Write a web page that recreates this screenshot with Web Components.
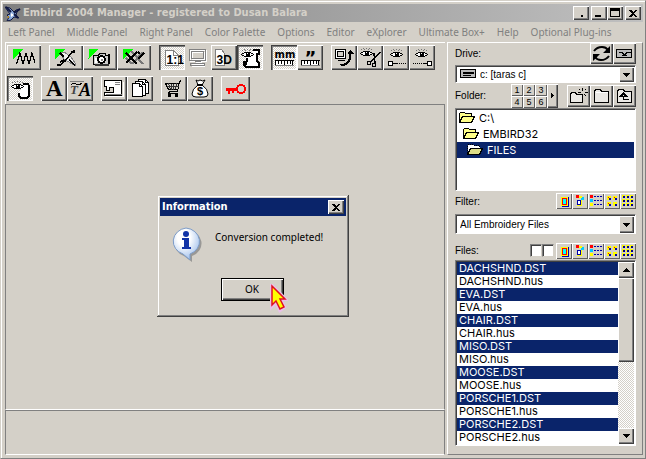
<!DOCTYPE html>
<html lang="en">
<head>
<meta charset="utf-8">
<title>Embird 2004 Manager</title>
<style>
html,body{margin:0;height:100%;background:#d4d0c8}
body{font:10px/13px "Noto Sans","Open Sans",sans-serif;color:#000;
 --navy:#0a246a;--label:"Liberation Sans",Arial,sans-serif;--list:Inter,Roboto,sans-serif}
</style>
</head>
<body>
<emb-app></emb-app>
<script>
const define=(name,html,setup)=>{
  const t=document.createElement('template');
  t.innerHTML='<style>*{box-sizing:border-box}:host{box-sizing:border-box}</style>'+html;
  customElements.define(name,class extends HTMLElement{
    connectedCallback(){
      if(this.shadowRoot)return;
      const r=this.attachShadow({mode:'open'});
      r.append(t.content.cloneNode(true));
      if(setup)setup(this,r);
    }
  });
};

/* ---------- icons ---------- */
const corner='<path fill="#0f0" d="M6 4h11l-11 10z"/>';
const eye=(x,y)=>`<g transform="translate(${x} ${y})"><path d="M3 0h1v1H3zM6 0h1v1H6zM9 0h1v1H9zM1 1h1v1H1zM4 1h1v1H4zM8 1h1v1H8zM11 1h1v1h-1z" fill="#777"/><path d="M2 4h9v3H2z" fill="#fff"/><path d="M3 3h7v1H3zM1 4h2v1H1zM10 4h2v1h-2zM0 5h1v1H0zM12 5h1v1h-1zM1 6h2v1H1zM10 6h2v1h-2zM3 7h7v1H3zM5 4h4v3H5z" fill="#000"/><path d="M6 4h1v1H6z" fill="#fff"/></g>`;
const page='<path d="M7 6h8l5 5v10H7z" fill="#fff" stroke="#808080"/><path d="M15 6v5h5" fill="none" stroke="#808080"/>';
const ruler='<path fill="#fff" d="M4 15h18v6H4z"/><path d="M4 21h19" stroke="#808080"/><path d="M4 16h19" stroke="#000"/><path d="M5 16v4M8 16v3M11 16v3M14 16v4M17 16v3M20 16v3M22 16v4" stroke="#000"/>';
const ICON={
wave:[34,25,corner+'<path d="M9 18h1l3-10 3 11 3-11 3 11 3-11 3 10" fill="none" stroke="#000" stroke-width="1.200"/>'],
needle:[34,25,corner+'<path d="M11 8l4-1 7 5 4 6v2l-3-1-8-5z" fill="#eee" stroke="#808080"/><path d="M11 8l4 4M20 15l6 5M8 20h3l5-4 7-9h2v-2M11 17l4-2" stroke="#000" stroke-width="1.500" fill="none"/>'],
camera:[34,25,corner+'<path d="M11 11h5l1-2h6v2h3v9H11z" fill="#ccc" stroke="#000"/><path d="M25 9h2v10h-2z" fill="#000"/><path d="M12 19h14v2H12z" fill="#333"/><circle cx="19" cy="15" r="3.500" fill="#fff" stroke="#000" stroke-width="2"/><path d="M18 14h2v2h-2z" fill="#888"/><path d="M12 13h2v5h-2z" fill="#fff"/>'],
hash:[34,25,corner+'<g fill="none" stroke-width="2"><path d="M14 6l12 13M26 7L15 19M9 13l6 6" stroke="#777"/><path d="M9 8l11 11M20 7L9 18M21 7l2 2M24 11l3-3M21 14l6-6" stroke="#000"/></g>'],
one:[26,25,page+'<text x="8" y="19" font-family="Liberation Sans" font-weight="bold" font-size="12">1:1</text>'],
screen:[26,25,'<path d="M5 5h16v11H5zM7 7h12v7H7zM10 17h6M7 19h12v2H7z" fill="none" stroke="#fff" transform="translate(1 1)"/><path d="M5 5h16v11H5zM7 7h12v7H7zM10 17h6M6 19h14v2H6z" fill="none" stroke="#808080"/>'],
three:[26,25,'<path d="M5 5h6l3 4v12H5z" fill="#fff" stroke="#808080"/><text x="6" y="19" font-family="Liberation Sans" font-weight="bold" font-size="12">3D</text>'],
scroll:[26,25,'<path d="M13 8l5-3h4v4h-2v7l2 3v3H9l-2-2v-3h3V8z" fill="#fff"/><path d="M16 5h6v4h-3M20 9v7l2 2v4H9l-2-2v-3h2v3M10 13v4" fill="none" stroke="#000" stroke-width="1.500"/>'+eye(4,4)],
mm:[26,25,'<text x="4" y="13" font-family="DejaVu Sans" font-weight="bold" font-size="10">mm</text>'+ruler],
inch:[26,25,'<text x="8" y="19" font-family="DejaVu Sans" font-weight="bold" font-size="18">”</text>'+ruler],
send:[26,25,'<path d="M5 5h10v9H5z" fill="#fff" stroke="#000" stroke-width="1.500"/><path d="M7 7h6v5H7z" fill="#d4d0c8" stroke="#000"/><path d="M7 16h7" stroke="#000"/><path d="M10 22v-2q9-1 9-11h-2l3-4 3 4h-2q0 12-11 13z" fill="#000"/>'],
cut:[26,25,eye(3,3)+'<path d="M23 7l-9 10M17 8l1 11" stroke="#000" stroke-width="1.500"/><circle cx="12" cy="18" r="2" fill="none" stroke="#000"/><circle cx="17" cy="20" r="2" fill="none" stroke="#000"/>'],
first:[26,25,eye(7,4)+'<path d="M5 16h4v4H5z" fill="#fff" stroke="#000"/><path d="M10 18h4" stroke="#000"/><path d="M14 18h10" stroke="#000" stroke-dasharray="1 1"/>'],
last:[26,25,eye(6,4)+'<path d="M18 16h4v4h-4z" fill="#fff" stroke="#000"/><path d="M14 18h4" stroke="#000"/><path d="M4 18h10" stroke="#000" stroke-dasharray="1 1"/>'],
eyehoop:[26,25,'<path d="M16 8h4q2 0 2 3v7q0 4-4 4h-4q-2-1-2-3v-2" fill="#fff" stroke="#000" stroke-width="2"/>'+eye(4,5)],
letter:[26,25,'<text x="5" y="20" font-family="Liberation Serif" font-weight="bold" font-size="23">A</text>'],
script:[26,25,'<path d="M3 5h14" stroke="#808080"/><path d="M4 9q2-3 5-1t6-1" stroke="#000" fill="none"/><text x="3" y="18" font-family="Liberation Serif" font-weight="bold" font-style="italic" font-size="13" fill="#444">T</text><text x="12" y="20" font-family="Liberation Serif" font-weight="bold" font-style="italic" font-size="18">A</text>'],
sewing:[26,25,'<path d="M4 5h17v15H4v-3h9V12H9v3H6v-4H4z" fill="#fff" stroke="#000"/><path d="M5 19h16M14 7h5M14 9h5" stroke="#808080"/><path d="M4 21h19V6" fill="none" stroke="#fff"/>'],
pages:[26,25,'<path d="M12 4h7l3 3v11H12z" fill="#fff" stroke="#000"/><path d="M9 6h7l3 3v11H9z" fill="#fff" stroke="#000"/><path d="M6 8h7l3 3v10H6z" fill="#fff" stroke="#000"/><path d="M13 8v3h3M16 6v3h3M19 4v3h3" fill="none" stroke="#000"/>'],
cart:[26,25,'<path d="M21 5l-2 1-2 10H9M5 8h13M5 8l3 6h9M9 16l-1 2h9" fill="none" stroke="#000"/><path d="M8 8l2 6M11 8v6M13 8v6M16 8l-1 6M6 11h12" stroke="#333"/><circle cx="9" cy="20" r="1.500"/><circle cx="16" cy="20" r="1.500"/>'],
money:[26,25,'<path d="M9 4q2 2 4 0 3 2 5 0l-3 5q6 4 6 9 0 3-4 3H9q-4 0-4-3 0-5 6-9z" fill="#fff" stroke="#000"/><path d="M10 9h6" stroke="#000" stroke-width="2"/><text x="10" y="19" font-family="Liberation Sans" font-weight="bold" font-size="11">$</text>'],
key:[29,25,'<path d="M5 12h12v3H9v3H7v-3H5z" fill="#f00"/><path d="M11 14h2v3h-2z" fill="#f00"/><circle cx="20" cy="13" r="4" fill="none" stroke="#f00" stroke-width="2"/>'],
refresh:[23,21,'<g fill="none" stroke="#000" stroke-width="2"><path d="M4 8q3-4 8-4 4 0 6 3"/><path d="M19 13q-3 4-8 4-4 0-6-3"/></g><path d="M20 3v7h-7zM3 18v-7h7z"/>'],
drive:[17,10,'<path d="M1 1h15v8H1z" fill="#bbb" stroke="#000"/><path d="M3 4h11" stroke="#000" stroke-width="2"/><path d="M3 7h8" stroke="#000"/>'],
disk:[17,10,'<path d="M1 1h15v8H1z" fill="#bbb" stroke="#000"/><path d="M3 4h4l1 2h2l1-2h4M6 7h5" fill="none" stroke="#000"/>'],
folder:[16,16,'<path d="M1 4l1-2h5l1 2h7v11H1z" fill="url(#d)" stroke="#000"/><path d="M2 5h12" stroke="#fff"/>'],
newf:[18,16,'<path d="M1 7l1-2h4l1 2h6v8H1z" fill="url(#d)" stroke="#000"/><path d="M13 0v3M13 7v3M8 5h3M15 5h3M10 2l1 1M16 2l-1 1M15 7l2 2" stroke="#000"/>'],
upf:[16,16,'<path d="M1 4l1-2h5l1 2h7v11H1z" fill="url(#d)" stroke="#000"/><path d="M4 9l3-3 3 3zM7 8v4h5" fill="none" stroke="#000" stroke-width="1.500"/>'],
open:[16,12,'<path d="M1 11V2l1-1h4l1 1h6v3M1 11L4 5h12l-3 6z" fill="#ff8" stroke="#000"/>'],
openx:[16,12,'<path d="M1 11V2l1-1h4l1 1h6v3z" fill="#fff" stroke="#000" stroke-dasharray="1 1"/><path d="M1 11L4 5h12l-3 6z" fill="#dd8" stroke="#000"/>'],
v1:[14,14,'<path d="M4 3h7v9H4z" fill="#ff0"/><path d="M5 4h5v7H5z" fill="#f00"/><path d="M6 5h3v5H6z" fill="#0ff"/><path d="M11 3h1v10H5v-1h6z" fill="#00a"/>'],
v2:[14,14,'<path d="M3 1h3v3H3z" fill="#f00"/><path d="M4 6h5v6H4z" fill="#ff0"/><path d="M5 7h3v4H5z" fill="#fff" stroke="#00a"/><path d="M8 3h3v3H8z" fill="#0cf"/><path d="M6 2h3v2H6z" fill="#ff0"/>'],
v3:[14,14,'<path d="M1 1h3v3H1z" fill="#f00"/><path d="M1 5h3v3H1z" fill="#0cf"/><path d="M1 9h3v3H1z" fill="#ff0"/><path d="M5 3h9M5 7h9M5 11h9" stroke="#00a" stroke-dasharray="2 1"/>'],
v4:[14,14,'<path d="M2 2h4v4H2zM8 2h4v4H8zM2 8h4v4H2zM8 8h4v4H8z" fill="#ff0"/><path d="M4 4h2v2H4zM10 4h2v2h-2zM4 10h2v2H4zM10 10h2v2h-2z" fill="#00a"/><path d="M3 3h1v1H3zM9 3h1v1H9zM3 9h1v1H3z" fill="#f00"/>'],
v5:[14,14,'<path d="M1 1h3v3H1zM5 1h3v3H5zM9 1h3v3H9zM1 5h3v3H1zM5 5h3v3H5zM9 5h3v3H9zM1 9h3v3H1zM5 9h3v3H5zM9 9h3v3H9z" fill="#ff0"/><path d="M2 2h2v2H2zM6 2h2v2H6zM10 2h2v2h-2zM2 6h2v2H2zM6 6h2v2H6zM10 6h2v2h-2zM2 10h2v2H2zM6 10h2v2H6zM10 10h2v2h-2z" fill="#008"/>'],
bird:[16,16,'<path d="M0 2l5 1 4 4 2-2 4-1-3 3-1 3 3 3-5-1-3 3-4 1 2-4-2-2 3-1z" fill="#8aa8d8" stroke="#101840"/><path d="M1 2l5 5M9 8l6-4M9 9l4 4" stroke="#101840" stroke-width="2"/><path d="M6 8l3 2-3 2z" fill="#fff"/><path d="M2 12l2-1v2z" fill="#d90"/>'],
close:[10,9,'<path d="M1 1h2l2 2 2-2h2L6 4.500 9 8H7L5 6 3 8H1l3-3.500z" fill="#000"/>'],
max:[11,10,'<path d="M1 1h9v8H1z" fill="none" stroke="#000"/><path d="M1 1h9v2H1z" fill="#000"/>'],
min:[10,10,'<path d="M1 7h6v2H1z" fill="#000"/>'],
dot:[10,10,'<path d="M5 7h2v2H5z" fill="#000"/>'],
down:[7,4,'<path d="M0 0h7L3.500 4z" fill="#000"/>'],
up:[7,4,'<path d="M0 4h7L3.500 0z" fill="#000"/>'],
right:[3,5,'<path d="M0 0l3 2.500-3 2.500z" fill="#000"/>'],
info:[34,36,'<defs><radialGradient id="g" cx=".4" cy=".3" r=".8"><stop offset=".3" stop-color="#fff"/><stop offset="1" stop-color="#8fb4e8"/></radialGradient></defs><path d="M18 3a15 13.500 0 0 1 4 26v6l-8-6A15 13.500 0 0 1 18 3z" fill="#8a8a8a" opacity=".8"/><path d="M16 1a15 13.500 0 0 1 4 26v6l-7-6A15 13.500 0 0 1 16 1z" fill="url(#g)" stroke="#7d9cc8"/><circle cx="16" cy="7" r="3" fill="#1234a8"/><path d="M12 11h7v9h2v2H12v-2h2v-7h-2z" fill="#1234a8"/>'],
cursor:[18,29,'<path d="M2 2l13 13h-5l4 8-4 3-4-8-4 4z" fill="#ff0" stroke="#e8c0e8" stroke-width="4"/><path d="M2 2l13 13h-5l4 8-4 2-4-8-4 4z" fill="#ff0" stroke="#e01020" stroke-width="1.500"/>']
};
const SOFT=/^(info|cursor|bird|refresh|money)$/;
const HALF=/^(open|openx|page|one|screen|three|sewing|pages|folder|newf|upf|camera|cart|drive|disk|max|mm|inch|send|v2|v3)$/;
define('emb-icon','<style>:host{display:block;flex:none}svg{display:block}</style><div></div>',(h,r)=>{
  const n=h.getAttribute('name'),[w,H,s]=ICON[n];
  r.querySelector('div').innerHTML=`<svg width="${w}" height="${H}" viewBox="0 0 ${w} ${H}" aria-hidden="true" ${SOFT.test(n)?'':'shape-rendering="crispEdges"'}><defs><pattern id="d" width="2" height="2" patternUnits="userSpaceOnUse"><rect width="2" height="2" fill="#d4d0c8"/><path d="M0 0h1v1H0zM1 1h1v1H1z" fill="#fff"/></pattern></defs>${HALF.test(n)?`<g transform="translate(-.5 -.5)">${s}</g>`:s}</svg>`;
});

/* ---------- push button ---------- */
define('emb-button',`<style>
:host{display:block;flex:none;width:26px;height:25px}
:host([wide]){width:34px}
button{width:100%;height:100%;padding:0;border:0;font:inherit;color:#000;background:#d4d0c8;display:flex;align-items:center;justify-content:center;overflow:hidden;
 box-shadow:inset 1px 1px #fff,inset -1px -1px #404040,inset -2px -2px #808080}
:host([pressed]) button{background:conic-gradient(#fff 25%,#d4d0c8 0 50%,#fff 0 75%,#d4d0c8 0) 0 0/2px 2px;box-shadow:inset 1px 1px #404040,inset 2px 2px #808080,inset -1px -1px #fff}
:host([flat]) button{box-shadow:none}
:host([thin]) button{box-shadow:inset 1px 1px #fff,inset -1px -1px #606060}
:host([default]) button{border:1px solid #000}
</style><button type="button"><slot></slot></button>`,(h,r)=>{
  const b=r.querySelector('button');
  if(h.hasAttribute('label'))b.setAttribute('aria-label',h.getAttribute('label'));
  if(h.hasAttribute('pressed'))b.setAttribute('aria-pressed','true');
});

/* ---------- title bar and menu ---------- */
define('emb-titlebar',`<style>
:host{display:flex;align-items:center;height:18px;padding:0 2px;gap:2px;background:linear-gradient(90deg,#808080,#c0c0c0);color:#d4d0c8}
h1{flex:1;margin:0;white-space:nowrap;font:bold 11px/18px "DejaVu Sans Condensed","DejaVu Sans",sans-serif}
.w{display:flex;gap:2px}.p{display:flex}
emb-button{width:16px;height:14px}
</style><emb-icon name="bird"></emb-icon><h1><slot></slot></h1>
<div class="w"><emb-button label="Tray"><emb-icon name="dot"></emb-icon></emb-button><div class="p"><emb-button label="Minimize"><emb-icon name="min"></emb-icon></emb-button><emb-button label="Maximize"><emb-icon name="max"></emb-icon></emb-button></div><emb-button label="Close"><emb-icon name="close"></emb-icon></emb-button></div>`);

define('emb-menu',`<style>
:host{display:block;height:20px}
nav{display:flex;gap:12px;padding:3px 5px}
a{color:#808080;text-decoration:none;white-space:nowrap;line-height:14px}
</style><nav></nav>`,(h,r)=>{
  r.querySelector('nav').innerHTML=h.getAttribute('items').split('|').map(t=>`<a href="#">${t}</a>`).join('');
});

/* ---------- toolbar ---------- */
define('emb-toolbar',`<style>
:host{display:flex;flex-direction:column;gap:6px;height:62px;padding:2px 0 2px 1px;border:solid #fff;border-width:1px 0 0 1px}
.row{display:flex;gap:8px}.g{display:flex}.k{width:29px}
</style><div id="a" class="row"></div><div id="b" class="row"></div>`,(h,r)=>{
  const draw=(id,groups)=>r.getElementById(id).innerHTML=groups.map(g=>'<div class="g">'+g.split(' ').map(x=>{
    const n=x.replace(/[*~+]/g,'');
    return `<emb-button label="${n}"${x.includes('*')?' pressed':''}${x.includes('~')?' flat':''}${x.includes('+')?' wide':''}${n=='key'?' class="k"':''}><emb-icon name="${n}"></emb-icon></emb-button>`}).join('')+'</div>').join('');
  draw('a',['wave+','needle+ camera+ hash+','one* screen~ three scroll*','mm* inch','send cut first last']);
  draw('b',['eyehoop*','letter script','sewing pages','cart money','key']);
});

/* ---------- combo box ---------- */
define('emb-combo',`<style>
:host{display:grid;flex:none;height:18px;border:1px solid;border-color:#808080 #fff #fff #808080;background:#fff;box-shadow:inset 1px 1px #404040;font-family:var(--label)}
:host([tall]){height:20px}
select{grid-area:1/1;width:100%;height:100%;min-width:0;appearance:none;border:0;background:none;padding:0 18px 0 4px;font:inherit;color:#000}
:host([icon]) select{padding-left:24px}
::slotted(emb-icon){grid-area:1/1;place-self:center start;margin-left:4px}
emb-button{grid-area:1/1;justify-self:end;width:16px;height:100%;padding:1px 1px 0 0;pointer-events:none}
</style><slot></slot><select></select><emb-button label="Open"><emb-icon name="down"></emb-icon></emb-button>`,(h,r)=>{
  const s=r.querySelector('select');
  s.setAttribute('aria-label',h.getAttribute('label'));
  s.innerHTML=`<option>${h.getAttribute('value')}</option>`;
});

/* ---------- lists ---------- */
define('emb-tree',`<style>
:host{display:block;flex:none;height:83px;padding:1px;border:1px solid;border-color:#808080 #fff #fff #808080;background:#fff;box-shadow:inset 1px 1px #404040;font:11px/16px var(--list)}
ul{margin:0;padding:0;list-style:none}
li{display:flex;align-items:center;gap:4px;height:16px;padding-left:2px}
li:nth-child(2){padding-left:6px}
li:nth-child(3){padding-left:10px;background:var(--navy);color:#fff}
</style><ul role="listbox" aria-label="Folder"><li role="option"><emb-icon name="open"></emb-icon>C:\\</li><li role="option"><emb-icon name="open"></emb-icon>EMBIRD32</li><li role="option" aria-selected="true"><emb-icon name="openx"></emb-icon>FILES</li></ul>`);

define('emb-files',`<style>
:host{display:flex;flex:1 1 0;min-height:0;padding:1px;border:1px solid;border-color:#808080 #fff #fff #808080;background:#fff;box-shadow:inset 1px 1px #404040;font:11px/13px var(--list)}
ul{flex:1;margin:0;padding:0;list-style:none;overflow:hidden}
li{height:13px;padding-left:2px;white-space:nowrap}
li[aria-selected]{background:var(--navy);color:#fff}
.s{width:16px;display:flex;flex-direction:column;background:conic-gradient(#fff 25%,#d4d0c8 0 50%,#fff 0 75%,#d4d0c8 0) 0 0/2px 2px}
.s emb-button{width:16px;height:16px}
.s .t{flex:none;height:46%}.f{flex:1}
</style><ul role="listbox" aria-label="Files" aria-multiselectable="true"></ul><div class="s"><emb-button label="Scroll up"><emb-icon name="up"></emb-icon></emb-button><emb-button class="t" label="Scroll position"></emb-button><span class="f"></span><emb-button label="Scroll down"><emb-icon name="down"></emb-icon></emb-button></div>`,(h,r)=>{
  r.querySelector('ul').innerHTML=h.getAttribute('names').split(' ').map(n=>`<li role="option" aria-selected="true">${n}.DST</li><li role="option">${n}.hus</li>`).join('')+'<li role="option" aria-selected="true"></li>';
});

define('emb-views',`<style>:host{display:flex}emb-button{width:16px;height:16px}</style>`+
 [1,2,3,4,5].map(i=>`<emb-button thin label="View ${i}"><emb-icon name="v${i}"></emb-icon></emb-button>`).join(''));

/* ---------- right-hand browser ---------- */
define('emb-browser',`<style>
:host{display:flex;flex-direction:column;width:196px;padding:0 6px 8px 7px;border:1px solid;border-color:#fff #808080 #808080 #fff;font-family:var(--label)}
.r{display:flex;align-items:center;flex:none}
.r>span{flex:1}
.drive{height:22px;padding-bottom:1px}.drive emb-button{width:23px;height:21px}
.folder{height:25px}.folder>emb-button{width:23px;height:22px}
.n{display:grid;grid-template-columns:12px 12px 12px 11px;grid-template-rows:12px 12px;margin-right:9px}
.n emb-button{width:auto;height:auto;font-size:9px;line-height:10px}
.n .m{grid-area:1/4/3/5}
.filter{height:23px;padding-bottom:3px}
.files{height:26px;padding-top:8px;padding-bottom:1px}
input{appearance:none;width:12px;height:13px;margin:0;background:#fff;border:1px solid;border-color:#808080 #d4d0c8 #d4d0c8 #808080;box-shadow:inset 1px 1px #404040}
input+input{margin-right:2px}
</style>
<div class="r drive"><span>Drive:</span><emb-button label="Refresh"><emb-icon name="refresh"></emb-icon></emb-button><emb-button label="Drive info"><emb-icon name="disk"></emb-icon></emb-button></div>
<emb-combo icon label="Drive" value="c: [taras c]"><emb-icon name="drive"></emb-icon></emb-combo>
<div class="r folder"><span>Folder:</span><div class="n"><emb-button thin>1</emb-button><emb-button thin>2</emb-button><emb-button thin>3</emb-button><emb-button class="m" label="More"><emb-icon name="right"></emb-icon></emb-button><emb-button thin>4</emb-button><emb-button thin>5</emb-button><emb-button thin>6</emb-button></div><emb-button label="New folder"><emb-icon name="newf"></emb-icon></emb-button><emb-button label="Open folder"><emb-icon name="folder"></emb-icon></emb-button><emb-button label="Parent folder"><emb-icon name="upf"></emb-icon></emb-button></div>
<emb-tree></emb-tree>
<div class="r filter"><span>Filter:</span><emb-views></emb-views></div>
<emb-combo tall label="Filter" value="All Embroidery Files"></emb-combo>
<div class="r files"><span>Files:</span><input type="checkbox" aria-label="First panel"><input type="checkbox" aria-label="Second panel"><emb-views></emb-views></div>
<emb-files names="DACHSHND EVA CHAIR MISO MOOSE PORSCHE1 PORSCHE2"></emb-files>`);

/* ---------- dialog ---------- */
define('emb-dialog',`<style>
:host{display:block;width:192px;padding:3px;background:#d4d0c8;box-shadow:inset -1px -1px #404040,inset 1px 1px #d4d0c8,inset -2px -2px #808080,inset 2px 2px #fff}
header{display:flex;align-items:center;height:18px;padding:0 2px;background:var(--navy);color:#fff;font:bold 11px/18px "DejaVu Sans Condensed","DejaVu Sans",sans-serif}
header span{flex:1}header emb-button{width:16px;height:14px}
.b{display:flex;gap:11px;padding:11px 10px 0}
p{margin:4px 0 0;height:46px}
.o{display:flex;justify-content:center;padding:1px 2px 13px 0}
.o emb-button{width:63px;height:23px}
.c{position:absolute;left:113px;top:89px}
</style><section role="dialog" aria-label="Information"><header><span>Information</span><emb-button label="Close"><emb-icon name="close"></emb-icon></emb-button></header>
<div class="b"><emb-icon name="info"></emb-icon><p><slot></slot></p></div>
<div class="o"><emb-button default>OK</emb-button></div></section><emb-icon class="c" name="cursor"></emb-icon>`);

/* ---------- window ---------- */
define('emb-app',`<style>
:host{display:flex;flex-direction:column;height:100vh;min-height:400px;padding:2px 2px 3px;background:#d4d0c8;border:solid;border-width:1px;border-color:#d4d0c8 #808080 #808080 #d4d0c8;box-shadow:inset 1px 1px #fff}
emb-titlebar{margin:1px 0 0}
.m{flex:1;display:flex;gap:2px;min-height:0;padding-left:2px}
.l{flex:1;display:flex;flex-direction:column;min-width:0}
.v,.s{border:1px solid;border-color:#808080 #808080 #fff #808080}
.v{position:relative;flex:1}.s{height:45px}
emb-dialog{position:absolute;left:151px;top:90px}
</style>
<emb-titlebar>Embird 2004 Manager - registered to Dusan Balara</emb-titlebar>
<emb-menu items="Left Panel|Middle Panel|Right Panel|Color Palette|Options|Editor|eXplorer|Ultimate Box+|Help|Optional Plug-ins"></emb-menu>
<div class="m"><div class="l"><emb-toolbar></emb-toolbar><div class="v"><emb-dialog>Conversion completed!</emb-dialog></div><div class="s"></div></div><emb-browser></emb-browser></div>`);
</script>
</body>
</html>
